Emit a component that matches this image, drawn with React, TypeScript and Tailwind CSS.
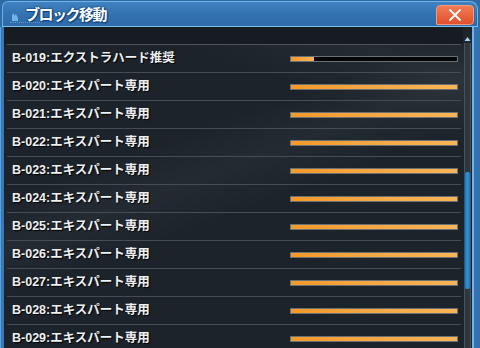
import React from "react";

const rows: { label: string; pct: number }[] = [
  { label: "B-019:エクストラハード推奨", pct: 14 },
  { label: "B-020:エキスパート専用", pct: 100 },
  { label: "B-021:エキスパート専用", pct: 100 },
  { label: "B-022:エキスパート専用", pct: 100 },
  { label: "B-023:エキスパート専用", pct: 100 },
  { label: "B-024:エキスパート専用", pct: 100 },
  { label: "B-025:エキスパート専用", pct: 100 },
  { label: "B-026:エキスパート専用", pct: 100 },
  { label: "B-027:エキスパート専用", pct: 100 },
  { label: "B-028:エキスパート専用", pct: 100 },
  { label: "B-029:エキスパート専用", pct: 100 },
];

export default function App() {
  return (
    <div
      className="relative w-[480px] h-[348px] overflow-hidden bg-[#2e6aa5] flex flex-col"
      style={{ fontFamily: '"Liberation Sans", "Noto Sans CJK JP", sans-serif' }}
    >
      {/* Title bar */}
      <div className="relative h-[25px] shrink-0 mx-[2px] mt-[1px] rounded-tl-[6px] rounded-tr-[8px] border-t border-l border-r border-[#6fb0e6] bg-gradient-to-b from-[#3f82c2] via-[#3473b2] to-[#2d69a6] flex items-center">
        <div className="relative w-[20px] h-full">
          <svg className="absolute left-[8px] top-[10px]" width="8" height="9" viewBox="0 0 8 9">
            <path d="M1 9 L1 3 L3 1 L3 4 L5 2 L7 6 L7 9 Z" fill="#7fc0f0" opacity="0.85" />
          </svg>
          <div className="absolute left-[7px] top-[20px] w-[32px] border-t border-dotted border-[#6aaee6] opacity-70" />
        </div>
        <span
          className="ml-[2px] text-[15px] font-bold text-white tracking-[-1.5px] leading-none"
          style={{ textShadow: "0 0 2px #0d3f78, 0 0 2px #0d3f78, 1px 1px 1px #0d3f78" }}
        >
          ブロック移動
        </span>
        <div className="flex-1" />
        <div className="mr-[3px] mt-[2px] w-[38px] h-[20px] rounded-[4px] rounded-bl-[1px] bg-gradient-to-b from-[#f27a52] to-[#e0502c] border border-[#f59a78] flex items-center justify-center">
          <svg width="14" height="12" viewBox="0 0 14 12">
            <path d="M2 1 L12 11 M12 1 L2 11" stroke="#ffffff" strokeWidth="1.8" strokeLinecap="round" />
          </svg>
        </div>
      </div>
      <div className="h-[1px] shrink-0 bg-[#7cc0f2] mx-[2px]" />

      {/* Body */}
      <div className="flex-1 flex min-h-0">
        <div className="w-[4px] shrink-0 bg-[#3678b8] border-l border-[#5fa0d8]" />
        <div className="relative flex-1 bg-[#1c232b] flex">
          {/* subtle streak decor */}
          <div className="absolute inset-0 bg-[linear-gradient(160deg,transparent_0%,transparent_35%,rgba(255,255,255,0.035)_45%,transparent_55%,transparent_100%)]" />
          <div className="absolute inset-0 bg-[linear-gradient(200deg,transparent_0%,rgba(255,255,255,0.04)_12%,transparent_25%)]" />
          <div className="relative flex-1 flex flex-col">
            <div className="h-[17px] shrink-0 bg-[#161c22]" />
            <div className="ml-[3px] mr-[2px] border-t border-[#4c535a] flex flex-col">
              {rows.map((r) => (
                <div
                  key={r.label}
                  className="h-[28px] shrink-0 border-b border-[#454c53] flex items-center"
                >
                  <span
                    className="pl-[5px] text-[12.5px] font-bold text-[#eef0f2] leading-none"
                    style={{ textShadow: "1px 1px 1px #000" }}
                  >
                    {r.label}
                  </span>
                  <div className="flex-1" />
                  <div className="w-[168px] h-[6px] mr-[3px] bg-[#050607] border border-[#6b7076] overflow-hidden">
                    <div
                      className="h-full bg-gradient-to-r from-[#f39a28] to-[#f8b456]"
                      style={{ width: `${r.pct}%` }}
                    />
                  </div>
                </div>
              ))}
            </div>
          </div>
          {/* scrollbar */}
          <div className="relative w-[9px] shrink-0 flex flex-col items-center pt-[9px]">
            <svg width="7" height="6" viewBox="0 0 7 6">
              <path d="M0.5 5 L3.5 1 L6.5 5 Z" fill="#9fd4f4" />
            </svg>
            <div className="relative mt-[1px] w-[7px] flex-1 bg-[#2c3742] border-l border-r border-[#45525e]">
              <div className="absolute left-[0px] right-[0px] top-[129px] h-[117px] rounded-[2px] bg-gradient-to-r from-[#1b78c0] via-[#2a95dc] to-[#1b78c0]" />
            </div>
          </div>
        </div>
        <div className="w-[8px] shrink-0 bg-[#3272b1] border-l-2 border-[#6fb2ea]" />
      </div>
    </div>
  );
}
